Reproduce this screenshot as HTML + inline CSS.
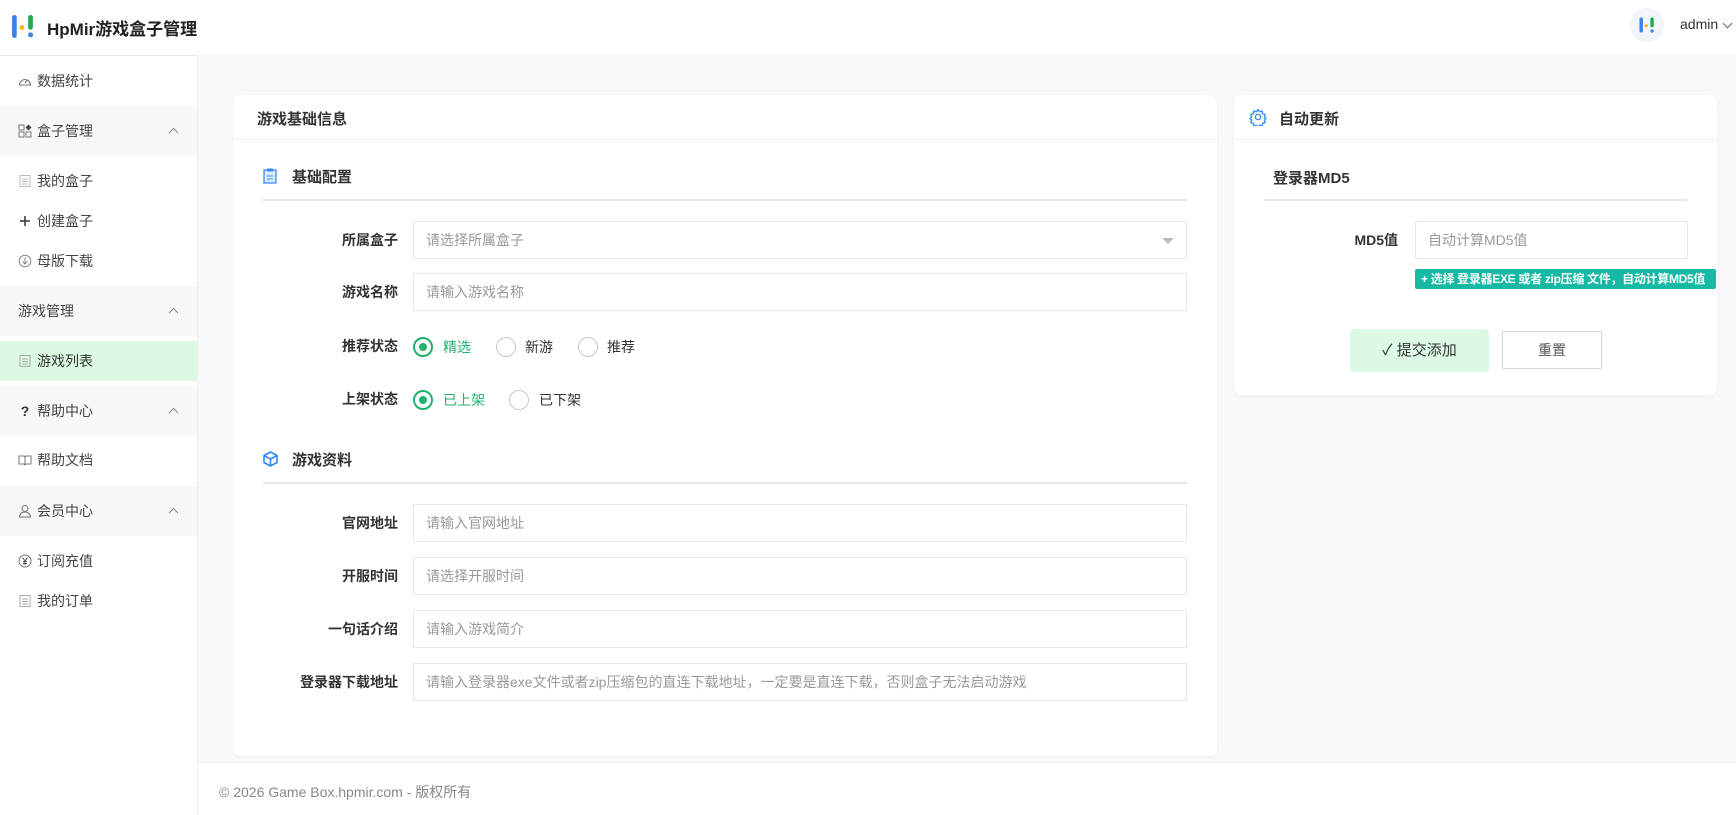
<!DOCTYPE html>
<html><head><meta charset="utf-8">
<style>
*{box-sizing:border-box;margin:0;padding:0}
body{width:1736px;height:815px;overflow:hidden;background:#f7f8fa;font-family:"Liberation Sans","Noto Sans CJK SC",sans-serif;font-size:14px;color:#333;position:relative}
.abs{position:absolute}
.hdr{left:0;top:0;width:1736px;height:55px;background:#fff}
.side{left:0;top:55px;width:198px;height:760px;background:#fff;border-right:1px solid #eee;border-top:1px solid #e8e8e8}
.mi{position:absolute;left:0;width:197px;height:40px;display:flex;align-items:center;padding-left:18px;font-size:14px;color:#444}
.mi svg{margin-right:5px;flex:none}
.grp{background:#f6f7f9;height:50px}
.chev{position:absolute;right:20px;top:50%;width:7px;height:7px;border-left:1.3px solid #888;border-top:1.3px solid #888;transform:translateY(-25%) rotate(45deg)}
.card{background:#fff;border-radius:8px;box-shadow:0 1px 4px rgba(0,0,0,.04)}
.ttl{font-weight:bold;font-size:15px;color:#333}
.lbl{position:absolute;font-size:14px;font-weight:bold;color:#333;text-align:right;width:160px;line-height:38px}
.inp{position:absolute;border:1px solid #e4e6ea;border-radius:2px;height:38px;line-height:36px;padding-left:12px;color:#999;font-size:14px;background:#fff}
.rad{position:absolute;width:20px;height:20px;border-radius:50%;border:1.5px solid #c6c6c6}
.rad.on{border:2px solid #1fb36c}
.rad.on::after{content:"";position:absolute;left:4px;top:4px;width:8px;height:8px;border-radius:50%;background:#1fb36c}
.rt{position:absolute;font-size:14px;line-height:20px;color:#333}
.div{position:absolute;height:2px;background:#e6e6e6}
</style></head><body>
<div class="abs hdr">
 <svg class="abs" style="left:11px;top:14px" width="25" height="25" viewBox="0 0 24 24">
  <rect x="1" y="1" width="4.5" height="22" rx="2.2" fill="#3b82e6"/>
  <circle cx="10.5" cy="13" r="2.3" fill="#f4b400"/>
  <rect x="16.5" y="1" width="4.5" height="14" rx="2.2" fill="#1faa4b"/>
  <circle cx="18.8" cy="20" r="2.4" fill="#3b82e6"/>
 </svg>
 <div class="abs" style="left:47px;top:15px;font-size:17px;font-weight:bold;color:#222">HpMir游戏盒子管理</div>
 <div class="abs" style="left:1631px;top:9px;width:32px;height:32px;border-radius:50%;background:#f2f5fa;box-shadow:0 0 2px rgba(0,0,0,.15)">
  <svg class="abs" style="left:7px;top:7px" width="18" height="18" viewBox="0 0 24 24"><rect x="2" y="2" width="4.5" height="20" rx="2.2" fill="#3b82e6"/><circle cx="11" cy="13" r="2" fill="#f4b400"/><rect x="16.5" y="2" width="4.5" height="13" rx="2.2" fill="#1faa4b"/><circle cx="18.8" cy="20" r="2.2" fill="#3b82e6"/></svg>
 </div>
 <div class="abs" style="left:1680px;top:16px;font-size:14px;color:#333">admin</div>
 <div class="abs" style="left:1724px;top:20px;width:7px;height:7px;border-right:1.2px solid #666;border-bottom:1.2px solid #666;transform:rotate(45deg)"></div>
</div>
<div class="abs side">
 <div class="mi" style="top:5px"><svg width="14" height="14" viewBox="0 0 14 14"><path d="M1.5 11 A5.5 5.5 0 1 1 12.5 11 Z" fill="none" stroke="#777" stroke-width="1.1"/><line x1="7" y1="9" x2="9.5" y2="6" stroke="#777" stroke-width="1.1"/></svg>数据统计</div>
 <div class="mi grp" style="top:50px"><svg width="14" height="14" viewBox="0 0 14 14"><rect x="1" y="1" width="5" height="5" fill="none" stroke="#777"/><rect x="1" y="8" width="5" height="5" fill="none" stroke="#777"/><rect x="8" y="8" width="5" height="5" fill="none" stroke="#777"/><path d="M10.5 0.5 L13.5 3.5 L10.5 6.5 L7.5 3.5Z" fill="#444"/></svg>盒子管理<span class="chev"></span></div>
 <div class="mi" style="top:105px"><svg width="14" height="14" viewBox="0 0 14 14"><rect x="2" y="1.5" width="10" height="11" fill="none" stroke="#bbb"/><path d="M4 5h6M4 7.5h6M4 10h6" stroke="#bbb"/></svg>我的盒子</div>
 <div class="mi" style="top:145px"><svg width="14" height="14" viewBox="0 0 14 14"><path d="M7 2v10M2 7h10" stroke="#333" stroke-width="1.5"/></svg>创建盒子</div>
 <div class="mi" style="top:185px"><svg width="14" height="14" viewBox="0 0 14 14"><circle cx="7" cy="7" r="5.8" fill="none" stroke="#888"/><path d="M7 3.5v6M4.5 7.5L7 10l2.5-2.5" fill="none" stroke="#888"/></svg>母版下载</div>
 <div class="mi grp" style="top:230px">游戏管理<span class="chev"></span></div>
 <div class="mi" style="top:285px;background:#dcf9e3;color:#333"><svg width="14" height="14" viewBox="0 0 14 14"><rect x="2" y="1.5" width="10" height="11" fill="none" stroke="#aaa"/><path d="M4 5h6M4 7.5h6M4 10h6" stroke="#aaa"/></svg>游戏列表</div>
 <div class="mi grp" style="top:330px"><span style="width:14px;margin-right:5px;font-weight:bold;color:#333;text-align:center">?</span>帮助中心<span class="chev"></span></div>
 <div class="mi" style="top:384px"><svg width="14" height="14" viewBox="0 0 14 14"><path d="M1 3h5l1 1 1-1h5v8H8l-1 1-1-1H1z M7 4v8" fill="none" stroke="#777"/></svg>帮助文档</div>
 <div class="mi grp" style="top:430px"><svg width="14" height="14" viewBox="0 0 14 14"><circle cx="7" cy="4.5" r="3" fill="none" stroke="#777"/><path d="M1.5 13c0-3 2.5-5 5.5-5s5.5 2 5.5 5z" fill="none" stroke="#777"/></svg>会员中心<span class="chev"></span></div>
 <div class="mi" style="top:485px"><svg width="14" height="14" viewBox="0 0 14 14"><circle cx="7" cy="7" r="6" fill="none" stroke="#777"/><path d="M4.5 3.5L7 7l2.5-3.5M7 7v4M5 7.5h4M5 9.5h4" fill="none" stroke="#555"/></svg>订阅充值</div>
 <div class="mi" style="top:525px"><svg width="14" height="14" viewBox="0 0 14 14"><rect x="2" y="1.5" width="10" height="11" fill="none" stroke="#aaa"/><path d="M4 5h6M4 7.5h6M4 10h6" stroke="#aaa"/></svg>我的订单</div>
</div>

<div class="abs card" style="left:233px;top:95px;width:984px;height:661px">
 <div class="abs ttl" style="left:24px;top:13px">游戏基础信息</div>
 <div class="abs" style="left:0;top:44px;width:984px;height:1px;background:#eee"></div>
</div>
<svg class="abs" style="left:263px;top:168px" width="14" height="16" viewBox="0 0 14 16"><rect x="1" y="2" width="12" height="13" fill="#dbeafe" stroke="#3b8cf0" stroke-width="1.3"/><rect x="4" y="0.5" width="6" height="3" fill="#3b8cf0"/><line x1="4" y1="8" x2="10" y2="8" stroke="#3b8cf0"/><line x1="4" y1="11" x2="10" y2="11" stroke="#3b8cf0"/></svg>
<div class="abs ttl" style="left:292px;top:166px">基础配置</div>
<div class="div" style="left:263px;top:199px;width:924px"></div>
<div class="lbl" style="left:238px;top:221px">所属盒子</div>
<div class="inp" style="left:413px;top:221px;width:774px">请选择所属盒子<span class="abs" style="right:12px;top:16px;border-left:6px solid transparent;border-right:6px solid transparent;border-top:6px solid #bbb"></span></div>
<div class="lbl" style="left:238px;top:273px">游戏名称</div>
<div class="inp" style="left:413px;top:273px;width:774px">请输入游戏名称</div>
<div class="lbl" style="left:238px;top:327px">推荐状态</div>
<div class="rad on" style="left:413px;top:337px"></div><div class="rt" style="left:443px;top:337px;color:#1fb36c">精选</div>
<div class="rad" style="left:496px;top:337px"></div><div class="rt" style="left:525px;top:337px">新游</div>
<div class="rad" style="left:578px;top:337px"></div><div class="rt" style="left:607px;top:337px">推荐</div>
<div class="lbl" style="left:238px;top:380px">上架状态</div>
<div class="rad on" style="left:413px;top:390px"></div><div class="rt" style="left:443px;top:390px;color:#1fb36c">已上架</div>
<div class="rad" style="left:509px;top:390px"></div><div class="rt" style="left:539px;top:390px">已下架</div>
<svg class="abs" style="left:263px;top:451px" width="15" height="16" viewBox="0 0 15 16"><path d="M7.5 1 L14 4.5 V11.5 L7.5 15 L1 11.5 V4.5 Z M1 4.5 L7.5 8 L14 4.5 M7.5 8 V15" fill="none" stroke="#2f8af5" stroke-width="1.6" stroke-linejoin="round"/></svg>
<div class="abs ttl" style="left:292px;top:449px">游戏资料</div>
<div class="div" style="left:263px;top:482px;width:924px"></div>
<div class="lbl" style="left:238px;top:504px">官网地址</div>
<div class="inp" style="left:413px;top:504px;width:774px">请输入官网地址</div>
<div class="lbl" style="left:238px;top:557px">开服时间</div>
<div class="inp" style="left:413px;top:557px;width:774px">请选择开服时间</div>
<div class="lbl" style="left:238px;top:610px">一句话介绍</div>
<div class="inp" style="left:413px;top:610px;width:774px">请输入游戏简介</div>
<div class="lbl" style="left:238px;top:663px">登录器下载地址</div>
<div class="inp" style="left:413px;top:663px;width:774px">请输入登录器exe文件或者zip压缩包的直连下载地址，一定要是直连下载，否则盒子无法启动游戏</div>

<div class="abs card" style="left:1234px;top:95px;width:483px;height:300px">
 <div class="abs" style="left:0;top:44px;width:483px;height:1px;background:#eee"></div>
</div>
<svg class="abs" style="left:1249px;top:108px" width="18" height="18" viewBox="0 0 24 24"><path d="M12 2l2 3 3.5-1 .5 3.5 3.5 1-1 3.5 2 2-2 2 1 3.5-3.5 1-.5 3.5-3.5-1-2 3-2-3-3.5 1-.5-3.5-3.5-1 1-3.5-2-2 2-2-1-3.5 3.5-1 .5-3.5 3.5 1z" fill="none" stroke="#2f8af5" stroke-width="1.8" stroke-linejoin="round"/><circle cx="12" cy="12" r="3.5" fill="none" stroke="#2f8af5" stroke-width="1.8"/></svg>
<div class="abs ttl" style="left:1279px;top:108px">自动更新</div>
<div class="abs ttl" style="left:1273px;top:167px">登录器MD5</div>
<div class="div" style="left:1264px;top:199px;width:423px"></div>
<div class="lbl" style="left:1238px;top:221px">MD5值</div>
<div class="inp" style="left:1415px;top:221px;width:273px">自动计算MD5值</div>
<div class="abs" style="left:1415px;top:269px;width:301px;height:20px;background:#16b9a4;color:#fff;font-size:12px;font-weight:bold;line-height:20px;padding-left:6px;border-radius:2px;white-space:nowrap;overflow:hidden;letter-spacing:-0.3px">+ 选择 登录器EXE 或者 zip压缩 文件，自动计算MD5值</div>
<div class="abs" style="left:1350px;top:329px;width:139px;height:43px;background:#dcf9e5;border-radius:4px;font-size:15px;color:#333;line-height:43px;text-align:center">✓ 提交添加</div>
<div class="abs" style="left:1502px;top:331px;width:100px;height:38px;border:1px solid #d5d5d5;border-radius:2px;background:#fff;font-size:14px;color:#555;line-height:36px;text-align:center">重置</div>

<div class="abs" style="left:198px;top:762px;width:1538px;height:53px;background:#fff;border-top:1px solid #eee"></div>
<div class="abs" style="left:219px;top:782px;font-size:14px;color:#888">© 2026 Game Box.hpmir.com - 版权所有</div>
</body></html>
